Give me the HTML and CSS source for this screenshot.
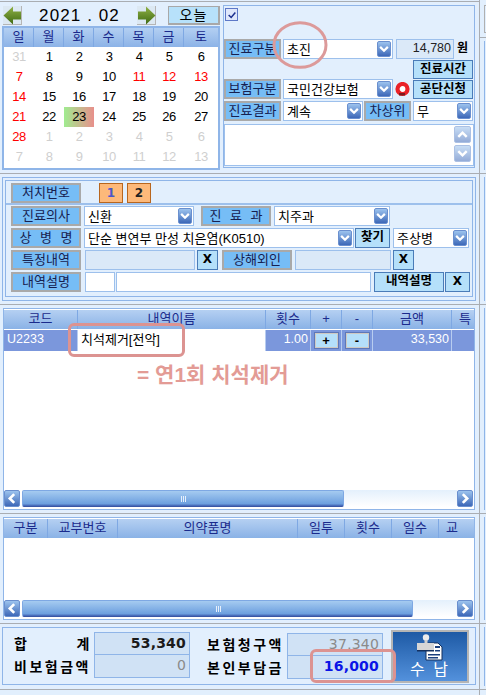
FILE: index.html
```html
<!DOCTYPE html>
<html lang="ko">
<head>
<meta charset="utf-8">
<title>진료</title>
<link rel="stylesheet" href="styles.css">
</head>
<body>
<svg class="defs" width="0" height="0" aria-hidden="true">
  <defs>
    <symbol id="chev" viewBox="0 0 14 16"><path d="M2.5 5.5 7 10l4.5-4.5" fill="none" stroke="#fff" stroke-width="2.6"/></symbol>
    <symbol id="chevup" viewBox="0 0 14 16"><path d="M2.5 10.5 7 6l4.5 4.5" fill="none" stroke="#fff" stroke-width="2.6"/></symbol>
    <symbol id="chevl" viewBox="0 0 16 17"><path d="M10.5 3.5 5.5 8.5l5 5" fill="none" stroke="#fff" stroke-width="3"/></symbol>
    <symbol id="chevr" viewBox="0 0 16 17"><path d="M5.5 3.5l5 5-5 5" fill="none" stroke="#fff" stroke-width="3"/></symbol>
    <linearGradient id="green" x1="0" y1="0" x2="0" y2="1"><stop offset="0" stop-color="#8fb146"/><stop offset="1" stop-color="#3f6a12"/></linearGradient>
  </defs>
</svg>
<div class="app">
  <div class="main">
    <section class="sec1">
      <div class="calside">
        <div class="nav">
          <span class="arrowbtn"><svg viewBox="0 0 19 19" width="19" height="19"><path d="M0.500 9.500 10 0.500v5h8v8h-8v5z" fill="url(#green)"/></svg></span>
          <span class="title">2021 . 02</span>
          <span class="arrowbtn"><svg viewBox="0 0 19 19" width="19" height="19"><path d="M18.500 9.500 9 0.500v5H1v8h8v5z" fill="url(#green)"/></svg></span>
          <span class="today">오늘</span>
        </div>
        <div class="cal">
          <div class="calhead"><span>일</span><span>월</span><span>화</span><span>수</span><span>목</span><span>금</span><span>토</span></div>
          <div class="caldays">
            <span class="off">31</span><span>1</span><span>2</span><span>3</span><span>4</span><span>5</span><span>6</span>
            <span class="red">7</span><span>8</span><span>9</span><span>10</span><span class="red">11</span><span class="red">12</span><span class="red">13</span>
            <span class="red">14</span><span>15</span><span>16</span><span>17</span><span>18</span><span>19</span><span>20</span>
            <span class="red">21</span><span>22</span><span class="sel">23</span><span>24</span><span>25</span><span>26</span><span>27</span>
            <span class="red">28</span><span class="off">1</span><span class="off">2</span><span class="off">3</span><span class="off">4</span><span class="off">5</span><span class="off">6</span>
            <span class="off">7</span><span class="off">8</span><span class="off">9</span><span class="off">10</span><span class="off">11</span><span class="off">12</span><span class="off">13</span>
          </div>
        </div>
      </div>
      <div class="visit">
        <div class="checkrow"><span class="check"><svg viewBox="0 0 12 12" width="10" height="10"><path d="M2 6l3 3 5-6" fill="none" stroke="#1b2f8f" stroke-width="1.800"/></svg></span></div>
        <div class="row r1">
          <span class="label w57">진료구분</span>
          <span class="select w110">초진<svg class="sb"><use href="#chev"/></svg></span>
          <span class="amount">14,780</span>
          <b class="won">원</b>
        </div>
        <div class="row r2"><span class="btn w60 push">진료시간</span></div>
        <div class="row r3">
          <span class="label w57">보험구분</span>
          <span class="select w110">국민건강보험<svg class="sb"><use href="#chev"/></svg></span>
          <svg class="redicon" viewBox="0 0 15 15" width="15" height="15"><circle cx="7.500" cy="7" r="5" fill="#fff" stroke="#ea2128" stroke-width="4.200"/><path d="M4 11h6v2.500H4z" fill="#7d1a1f"/></svg>
          <span class="btn w60">공단신청</span>
        </div>
        <div class="row r4">
          <span class="label w57">진료결과</span>
          <span class="select w80">계속<svg class="sb"><use href="#chev"/></svg></span>
          <span class="label w47">차상위</span>
          <span class="select w60">무<svg class="sb"><use href="#chev"/></svg></span>
        </div>
        <div class="memo">
          <span class="memobtns">
            <svg class="sb faded"><use href="#chevup"/></svg>
            <svg class="sb faded"><use href="#chev"/></svg>
          </span>
        </div>
      </div>
    </section>

    <section class="sec2">
      <div class="panel2">
        <div class="inner2">
          <div class="procrow">
            <span class="label w70">처치번호</span>
            <span class="num one">1</span>
            <span class="num">2</span>
          </div>
          <div class="row2">
            <span class="label w70">진료의사</span>
            <span class="select w110">신환<svg class="sb"><use href="#chev"/></svg></span>
            <span class="label w70 gap7 wide">진 료 과</span>
            <span class="select w116">치주과<svg class="sb"><use href="#chev"/></svg></span>
          </div>
          <div class="row2">
            <span class="label w70 wide">상 병 명</span>
            <span class="select w270">단순 변연부 만성 치은염(K0510)<svg class="sb"><use href="#chev"/></svg></span>
            <span class="btn w35 tight">찾기</span>
            <span class="select w76">주상병<svg class="sb"><use href="#chev"/></svg></span>
          </div>
          <div class="row2">
            <span class="label w70">특정내역</span>
            <span class="field w110 ml1"></span>
            <span class="btn w21 minor">X</span>
            <span class="label w70 gap1">상해외인</span>
            <span class="field w96"></span>
            <span class="btn w21 minor">X</span>
          </div>
          <div class="row2">
            <span class="label w70">내역설명</span>
            <span class="field white w30 ml1"></span>
            <span class="field white w255 tight"></span>
            <span class="btn w70">내역설명</span>
            <span class="btn w25 tight">X</span>
          </div>
        </div>
      </div>
    </section>

    <section class="sec3">
      <div class="grid grid1">
        <div class="thead cols1"><span>코드</span><span>내역이름</span><span>횟수</span><span>+</span><span>-</span><span>금액</span><span class="clip">특</span></div>
        <div class="trow cols1">
          <span class="tl">U2233</span>
          <span class="name">치석제거[전악]</span>
          <span class="tr">1.00</span>
          <span class="tc"><span class="pm">+</span></span>
          <span class="tc"><span class="pm">-</span></span>
          <span class="tr">33,530</span>
          <span></span>
        </div>
        <div class="gridfill"></div>
        <div class="scroll">
          <svg class="sbtn"><use href="#chevl"/></svg>
          <span class="thumb t322"><i class="grip"></i></span>
          <span class="track"></span>
          <svg class="sbtn"><use href="#chevr"/></svg>
        </div>
      </div>
    </section>

    <section class="sec4">
      <div class="grid grid2">
        <div class="thead cols2"><span>구분</span><span>교부번호</span><span>의약품명</span><span>일투</span><span>횟수</span><span>일수</span><span class="clip">교</span></div>
        <div class="gridfill"></div>
        <div class="scroll">
          <svg class="sbtn"><use href="#chevl"/></svg>
          <span class="thumb t391"><i class="grip"></i></span>
          <span class="track"></span>
          <svg class="sbtn"><use href="#chevr"/></svg>
        </div>
      </div>
    </section>

    <section class="sec5">
      <div class="totals">
        <div class="sumcol">
          <div class="sumrow"><span class="sumlabel split"><b>합</b><b>계</b></span><span class="val">53,340</span></div>
          <div class="sumrow"><span class="sumlabel"><b>비보험금액</b></span><span class="val dim">0</span></div>
        </div>
        <div class="sumcol second">
          <div class="sumrow"><span class="sumlabel"><b>보험청구액</b></span><span class="val dim">37,340</span></div>
          <div class="sumrow"><span class="sumlabel"><b>본인부담금</b></span><span class="val blue">16,000</span></div>
        </div>
        <div class="pay">
          <svg viewBox="0 0 26 27" width="26" height="27">
            <path d="M9 9h12l4 4v13H9z" fill="#fff" stroke="#14305f"/>
            <path d="M18 12h5v2h-5zM18 16h5v1.500h-5zM11 20h12v1.500H11zM11 23h10v1.500H11z" fill="#1b3f7c"/>
            <circle cx="9" cy="3.500" r="3.200" fill="#ececec"/>
            <path d="M7.500 6h3v3h-3z" fill="#cfcfcf"/>
            <path d="M0 9h17v7H0z" fill="#d6d6d6"/>
            <path d="M0 16h17v1.500H0z" fill="#14305f"/>
          </svg>
          <span>수 납</span>
        </div>
      </div>
    </section>
  </div>
  <div class="gutter">
    <div class="g g36"><i class="gbox"></i></div>
    <div class="g g136"></div>
    <div class="g g130"></div>
    <div class="g g209"></div>
    <div class="g g110"></div>
    <div class="g g66"></div>
  </div>
  <svg class="circle" viewBox="0 0 56 48" width="56" height="48"><ellipse cx="28" cy="24" rx="26" ry="22.300" fill="none" stroke="#dc9a9a" stroke-width="3"/></svg>
  <span class="mark mark1"></span>
  <b class="note">= 연1회 치석제거</b>
  <span class="mark mark2"></span>
</div>
</body>
</html>
```

FILE: styles.css
```css
* { box-sizing: border-box; }
html, body { margin: 0; padding: 0; }
body {
  font-family: "Liberation Sans", "Noto Sans CJK KR", sans-serif;
  font-size: 13px;
  line-height: 1;
  color: #000;
  background: #e2effd;
}
.defs { position: absolute; }
.app { position: relative; display: flex; width: 486px; height: 695px; overflow: hidden; background: #e2effd; }
.main { width: 480px; padding-top: 1px; border-right: 1px solid #a9adb2; flex: none; }

/* sections */
.sec1 { display: flex; height: 173px; border-top: 1px solid #a9adb2; border-bottom: 1px solid #a9adb2; }
.sec2 { height: 131px; padding: 3px 0 0 2px; border-bottom: 1px solid #a9adb2; }
.sec3 { height: 209px; padding: 3px 0 0 3px; border-bottom: 1px solid #a9adb2; }
.sec4 { height: 110px; padding: 3px 0 0 3px; border-bottom: 1px solid #a9adb2; }
.sec5 { height: 66px; padding: 3px 0 0 2px; border-bottom: 1px solid #a9adb2; }

/* calendar */
.calside { width: 223px; padding: 3px 0 0 2px; flex: none; }
.nav { display: flex; align-items: center; height: 21px; padding-left: 1px; margin-bottom: 0; }
.arrowbtn { display: block; width: 19px; height: 19px; background: #dce8f2; border-right: 1px solid #b5b5b5; border-bottom: 1px solid #b5b5b5; flex: none; }
.arrowbtn svg { display: block; }
.title { width: 115px; text-align: center; font-size: 17px; letter-spacing: 1.100px; white-space: pre; }
.today { width: 52px; height: 19px; margin-left: 12px; text-align: center; line-height: 17px; font-size: 14px; background: #b7e1fa; border: 1px solid #a8a8a8; border-right-width: 2px; border-bottom-width: 2px; letter-spacing: 1px; }
.cal { width: 218px; height: 144px; border: 2px solid #8fb5e8; background: #fff; }
.calhead { display: grid; grid-template-columns: 30px 30px 30px 30px 30px 30px 34px; height: 19px; background: linear-gradient(#b3cff2, #8cb3e7); color: #1a2a8c; }
.calhead span { text-align: center; line-height: 18px; font-size: 13px; border-right: 1px solid #7ea8e3; }
.calhead span:last-child { border-right: 0; }
.caldays { display: grid; grid-template-columns: 30px 30px 30px 30px 30px 30px 34px; grid-auto-rows: 20px; }
.caldays span { text-align: center; line-height: 20px; font-size: 13px; letter-spacing: -0.500px; }
.caldays .off { color: #cfcfcf; }
.caldays .red { color: #f00; }
.caldays .sel { background: linear-gradient(90deg, #a0ec90, #e88f8b); }

/* visit form */
.visit { width: 252px; height: 163px; margin-top: 3px; border: 1px solid #8fb5e8; background: #e2effd; }
.checkrow { height: 33px; padding: 2px 0 0 1px; }
.check { display: flex; align-items: center; justify-content: center; width: 13px; height: 13px; background: #dfe7fb; border: 1px solid #5d78c7; }
.row { display: flex; align-items: flex-start; }
.r1 { height: 21px; }
.r2 { height: 19px; padding-right: 1px; }
.r3 { height: 22px; padding-right: 1px; }
.r4 { height: 23px; padding-right: 1px; }
.push { margin-left: auto; }
.label { display: block; height: 20px; text-align: center; line-height: 16px; white-space: nowrap; background: #76bdf6; border: 2px solid #a9a9a9; color: #16204f; flex: none; }
.wide { word-spacing: 5px; }
.select { position: relative; display: block; height: 20px; padding: 2px 0 0 3px; line-height: 15px; background: #fff; border: 1px solid #9dc0ec; white-space: nowrap; flex: none; }
.sb { display: block; width: 14px; height: 16px; border-radius: 2px; background: linear-gradient(#9cc3ee, #3d68b8); border: 1px solid #6a8fce; }
.select .sb { position: absolute; right: 1px; top: 1px; }
.faded { opacity: .55; }
.w21 { width: 21px; } .w25 { width: 25px; } .w30 { width: 30px; } .w35 { width: 35px; }
.w47 { width: 47px; } .w57 { width: 57px; } .w60 { width: 60px; } .w70 { width: 70px; }
.w76 { width: 76px; } .w80 { width: 80px; } .w96 { width: 96px; } .w110 { width: 110px; }
.w116 { width: 116px; } .w255 { width: 255px; } .w270 { width: 270px; }
.visit .select { margin-left: 2px; }
.visit .label + .select { margin-left: 2px; }
.r4 .select + .label { margin-left: 1px; }
.amount { width: 58px; height: 20px; margin-left: 3px; padding-right: 2px; text-align: right; line-height: 16px; font-size: 12.500px; color: #222; background: #dbe9f8; border: 1px solid #9dc0ec; }
.won { margin: 3px 0 0 3px; font-size: 12px; }
.btn { display: block; height: 20px; text-align: center; line-height: 16px; font-weight: 700; font-size: 12.500px; white-space: nowrap; background: #b5e0fa; border: 1.500px solid #4a7cb8; flex: none; }
.r2 .btn, .r3 .btn { height: 19px; }
.redicon { margin: 3px 0 0 2px; flex: none; }
.r3 .btn { margin-left: 3px; margin-top: 1px; }
.memo { position: relative; width: 250px; height: 42px; margin-top: 0; background: #fff; border: 1px solid #9dc0ec; }
.memobtns { position: absolute; right: 2px; top: 1px; display: flex; flex-direction: column; gap: 2px; }
.memobtns .sb { width: 17px; height: 17px; }

/* treatment panel */
.panel2 { width: 474px; height: 124px; padding: 2px; border: 1px solid #8fb5e8; background: #e2effd; }
.inner2 { height: 117px; border: 1px solid #8fb5e8; }
.procrow { display: flex; align-items: flex-start; height: 24px; padding: 2px 0 0 5px; border-bottom: 2px solid #9dc0ec; }
.num { width: 24px; height: 20px; text-align: center; line-height: 18px; font-weight: 700; font-size: 12px; font-family: "DejaVu Sans", sans-serif; color: #222; background: #fdb97a; border: 1px solid #b8661e; margin-left: 4px; }
.num.one { margin-left: 18px; color: #4a57c8; }
.row2 { display: flex; align-items: flex-start; gap: 3px; height: 20px; margin: 2px 0 0 5px; }
.procrow + .row2 { margin-top: 1px; }
.gap7 { margin-left: 4px; }
.gap1 { margin-left: 1px; }
.ml1 { margin-left: 1px; }
.tight { margin-left: -2px; }
.field { display: block; height: 20px; background: #dbe9f8; border: 1px solid #9dc0ec; flex: none; }
.field.white { background: #fff; }
.minor { margin-left: -1px; }
.row2 .w96 + .minor { margin-left: -1px; }
.btn.w21, .btn.w25 { font-family: "DejaVu Sans", sans-serif; font-size: 12px; }

/* grids */
.grid { display: flex; flex-direction: column; width: 472px; padding: 1px 0; border: 1px solid #8fb5e8; background: #fff; }
.grid1 { height: 202px; }
.grid2 { height: 103px; }
.thead { display: grid; height: 19px; overflow: hidden; background: linear-gradient(#b5d0f2, #8ab2e6); color: #1a2a8c; flex: none; }
.thead span { text-align: center; line-height: 18px; border-right: 1px solid #7ea8e3; white-space: nowrap; overflow: hidden; }
.thead .clip { border-right: 0; text-align: left; padding-left: 7px; }
.cols1 { grid-template-columns: 74px 188px 45px 31px 31px 79px 22px; }
.cols2 { grid-template-columns: 44px 70px 180px 47px 47px 47px 35px; }
.trow { display: grid; height: 21px; margin-top: 1px; background: #7b97dc; color: #fff; flex: none; }
.trow > span { line-height: 19px; border-right: 1px solid #b8cdf0; font-size: 12.500px; }
.trow > span:last-child { border-right: 0; }
.tl { padding-left: 3px; }
.tr { text-align: right; padding-right: 2px; }
.tc { display: flex; align-items: center; justify-content: center; }
.trow .name { padding-left: 3px; background: #fff; color: #000; font-size: 13px; }
.pm { display: block; width: 25px; height: 17px; text-align: center; line-height: 13px; font-weight: 700; font-size: 13px; color: #000; background: #b5e0fa; border: 2px solid #cfc9c2; outline: 1px solid #5e78b8; outline-offset: -1px; }
.gridfill { flex: 1; }
.scroll { display: flex; align-items: stretch; height: 17px; padding-right: 1px; flex: none; margin-bottom: 1px; }
.sbtn { display: block; width: 16px; height: 17px; border-radius: 2px; background: linear-gradient(#9cc3ee, #3d68b8); border: 1px solid #6a8fce; flex: none; }
.thumb { position: relative; display: block; margin-left: 2px; border: 1px solid #7ea8e3; border-bottom-color: #3a55a5; border-radius: 2px; background: linear-gradient(#a5cbf0, #6d9fdf 85%, #3f5fb0); flex: none; }
.t322 { width: 322px; }
.t391 { width: 391px; }
.grip { position: absolute; left: 50%; top: 5px; width: 5px; height: 6px; margin-left: -2px; background: repeating-linear-gradient(90deg, #e6effb 0 1px, transparent 1px 2px); }
.track { flex: 1; background: linear-gradient(#e4f0fc, #fff); }

/* totals */
.totals { display: flex; width: 474px; height: 58px; border: 1px solid #8fb5e8; background: #e2effd; }
.sumcol { padding-top: 4px; flex: none; }
.sumcol.second { margin-left: 17px; padding-top: 5px; }
.sumrow { display: flex; height: 23px; }
.sumlabel { display: flex; align-items: center; width: 80px; margin-left: 11px; margin-right: 0; font-size: 14px; letter-spacing: 2.500px; white-space: nowrap; }
.second .sumlabel { margin-left: 0; }
.split { justify-content: space-between; padding-right: 2px; }
.val { width: 96px; margin-left: 0; padding-right: 3px; text-align: right; line-height: 21px; font-weight: 700; font-size: 14px; font-family: "DejaVu Sans", sans-serif; letter-spacing: .2px; background: #d0e2f5; border: 1px solid #8fb5e8; margin-top: 0; color: #1a1a1a; }
.sumrow + .sumrow .val { border-top: 0; }
.val.dim { color: #8a8a8a; font-weight: 400; }
.val.blue { color: #0a14e6; }
.pay { display: flex; flex-direction: column; align-items: center; width: 78px; height: 53px; margin: 2px 0 0 8px; padding-top: 2px; background: linear-gradient(#1e5aa5, #5391dc); border: 2.500px solid #b5b5b5; color: #fff; flex: none; }
.pay svg { display: block; flex: none; }
.pay span { margin-top: 1px; font-size: 16px; letter-spacing: 2px; white-space: pre; }

/* right gutter */
.gutter { flex: 1; }
.g { position: relative; border-bottom: 1px solid #a9adb2; }
.g::after { content: ""; position: absolute; left: 4px; top: 3px; bottom: 3px; border-left: 1px solid #8fb5e8; }
.g36::after { content: none; }
.g36 { height: 37px; margin-top: 1px; }
.g136 { height: 136px; }
.g130 { height: 131px; }
.g209 { height: 209px; }
.g110 { height: 110px; }
.g66 { height: 66px; }
.gbox { position: absolute; left: 4px; top: 4px; width: 4px; height: 28px; border: 1px solid #b0b0b0; }

/* annotations painted over the screenshot */
.circle { position: absolute; left: 272px; top: 21px; }
.mark { position: absolute; border: 3px solid #dc9391; border-radius: 6px; }
.mark1 { left: 68px; top: 323px; width: 117px; height: 34px; }
.mark2 { left: 310px; top: 649px; width: 86px; height: 34px; }
.note { position: absolute; left: 137px; top: 364px; font-size: 21px; color: #e39b95; white-space: nowrap; }
```
